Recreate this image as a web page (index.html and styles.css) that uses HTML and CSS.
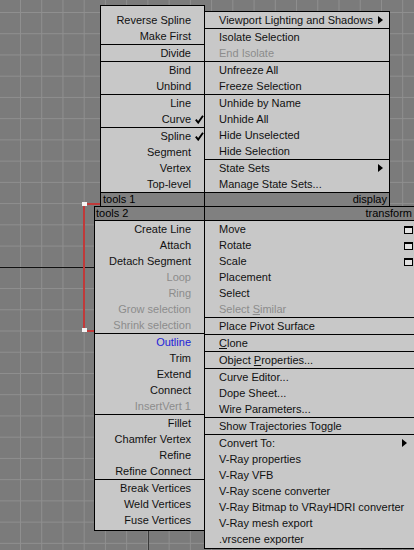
FILE: index.html
```html
<!DOCTYPE html>
<html>
<head>
<meta charset="utf-8">
<link rel="stylesheet" href="styles.css">
</head>
<body>
<div class="viewport">
  <div class="axis-h"></div>
  <div class="axis-v"></div>
  <svg class="spline" width="24" height="136" viewBox="0 0 24 136">
    <rect x="3" y="5" width="2" height="124" fill="#c03a3a"/>
    <rect x="6" y="3" width="16" height="2" fill="#c03a3a"/>
    <rect x="6" y="130" width="10" height="2" fill="#c03a3a"/>
    <rect x="2" y="2" width="5" height="4" fill="#f4f4f4"/>
    <rect x="2" y="128" width="5" height="4" fill="#f4f4f4"/>
  </svg>

  <div class="quad">
    <div class="quad-top">
      <div class="menu ul">
        <div class="items left">
          <div class="it">Reverse Spline</div>
          <div class="it">Make First</div>
          <div class="sep"></div>
          <div class="it">Divide</div>
          <div class="sep"></div>
          <div class="it">Bind</div>
          <div class="it">Unbind</div>
          <div class="sep"></div>
          <div class="it">Line</div>
          <div class="it checked">Curve<span class="chk"><svg width="9" height="9" viewBox="0 0 9 9"><path d="M0.8 4.6 L3.2 7.6 L8 0.8" fill="none" stroke="#000" stroke-width="1.9"/></svg></span></div>
          <div class="sep"></div>
          <div class="it checked">Spline<span class="chk"><svg width="9" height="9" viewBox="0 0 9 9"><path d="M0.8 4.6 L3.2 7.6 L8 0.8" fill="none" stroke="#000" stroke-width="1.9"/></svg></span></div>
          <div class="it">Segment</div>
          <div class="it">Vertex</div>
          <div class="it">Top-level</div>
        </div>
        <div class="head head-up">tools 1</div>
      </div>
      <div class="menu ur">
        <div class="items right">
          <div class="it"><span>Viewport Lighting and Shadows</span><span class="arrow arrow-tight"></span></div>
          <div class="sep"></div>
          <div class="it">Isolate Selection</div>
          <div class="it dis">End Isolate</div>
          <div class="sep"></div>
          <div class="it">Unfreeze All</div>
          <div class="it">Freeze Selection</div>
          <div class="sep"></div>
          <div class="it">Unhide by Name</div>
          <div class="it">Unhide All</div>
          <div class="it">Hide Unselected</div>
          <div class="it">Hide Selection</div>
          <div class="sep"></div>
          <div class="it"><span>State Sets</span><span class="arrow arrow-tight"></span></div>
          <div class="it">Manage State Sets...</div>
        </div>
        <div class="head head-up head-right">display</div>
      </div>
    </div>

    <div class="quad-bottom">
      <div class="menu ll">
        <div class="head head-down">tools 2</div>
        <div class="items left">
          <div class="it">Create Line</div>
          <div class="it">Attach</div>
          <div class="it">Detach Segment</div>
          <div class="it dis">Loop</div>
          <div class="it dis">Ring</div>
          <div class="it dis">Grow selection</div>
          <div class="it dis">Shrink selection</div>
          <div class="sep"></div>
          <div class="it blue">Outline</div>
          <div class="it">Trim</div>
          <div class="it">Extend</div>
          <div class="it">Connect</div>
          <div class="it dis">InsertVert 1</div>
          <div class="sep"></div>
          <div class="it">Fillet</div>
          <div class="it">Chamfer Vertex</div>
          <div class="it">Refine</div>
          <div class="it">Refine Connect</div>
          <div class="sep"></div>
          <div class="it">Break Vertices</div>
          <div class="it">Weld Vertices</div>
          <div class="it">Fuse Vertices</div>
        </div>
      </div>
      <div class="menu lr">
        <div class="head head-down head-right">transform</div>
        <div class="items right">
          <div class="it"><span>Move</span><span class="win"></span></div>
          <div class="it"><span>Rotate</span><span class="win"></span></div>
          <div class="it"><span>Scale</span><span class="win"></span></div>
          <div class="it">Placement</div>
          <div class="it">Select</div>
          <div class="it dis"><span>Select <u>S</u>imilar</span></div>
          <div class="sep"></div>
          <div class="it">Place Pivot Surface</div>
          <div class="sep"></div>
          <div class="it"><span><u>C</u>lone</span></div>
          <div class="sep"></div>
          <div class="it"><span>Object <u>P</u>roperties...</span></div>
          <div class="sep"></div>
          <div class="it">Curve Editor...</div>
          <div class="it">Dope Sheet...</div>
          <div class="it">Wire Parameters...</div>
          <div class="sep"></div>
          <div class="it">Show Trajectories Toggle</div>
          <div class="sep"></div>
          <div class="it"><span>Convert To:</span><span class="arrow arrow-wide"></span></div>
          <div class="it">V-Ray properties</div>
          <div class="it">V-Ray VFB</div>
          <div class="it">V-Ray scene converter</div>
          <div class="it">V-Ray Bitmap to VRayHDRI converter</div>
          <div class="it">V-Ray mesh export</div>
          <div class="it">.vrscene exporter</div>
        </div>
      </div>
    </div>
  </div>
</div>
</body>
</html>
```

FILE: styles.css
```css
html, body {
  margin: 0;
  padding: 0;
  background: #7b7b7b;
}

.viewport {
  position: relative;
  width: 414px;
  height: 550px;
  overflow: hidden;
  background-color: #7b7b7b;
  background-image:
    linear-gradient(to right, #8f8f8f 1px, transparent 1px),
    linear-gradient(to bottom, #8f8f8f 1px, transparent 1px);
  background-size: 21.24px 21.24px;
  background-position: 20px 12px;
  font-family: "Liberation Sans", Arial, sans-serif;
  font-size: 11px;
  color: #111;
}

.axis-h {
  position: absolute;
  left: 0;
  top: 267px;
  width: 200px;
  height: 1px;
  background: #111;
}

.axis-v {
  position: absolute;
  left: 148px;
  top: 500px;
  width: 1px;
  height: 50px;
  background: #3a3a3a;
}

.spline {
  position: absolute;
  left: 80px;
  top: 200px;
}

.quad {
  position: absolute;
  left: 94px;
  top: 5px;
}

.quad-top {
  display: flex;
  align-items: flex-end;
}

.quad-bottom {
  display: flex;
  align-items: flex-start;
  margin-top: -1px;
}

.menu {
  box-sizing: border-box;
  background: #c8c8c8;
  border: 1px solid #000;
  display: flex;
  flex-direction: column;
}

.ul {
  width: 105px;
  margin-left: 6px;
  padding-top: 6px;
}

.ur {
  width: 186px;
  margin-left: -1px;
}

.ll {
  width: 111px;
  padding-bottom: 2px;
}

.lr {
  width: 215px;
  margin-left: -1px;
  padding-bottom: 1px;
}

.items {
  display: flex;
  flex-direction: column;
}

.it {
  height: 16px;
  line-height: 16px;
  white-space: nowrap;
  display: flex;
  align-items: center;
}

.left .it {
  justify-content: flex-end;
  padding-right: 13px;
}

.right .it {
  justify-content: space-between;
  padding-left: 14px;
}

.sep {
  height: 1px;
  background: #000;
}

.dis {
  color: #8c8c8c;
}

.blue {
  color: #2323d8;
}

u {
  text-decoration: underline;
  text-underline-offset: 1px;
}

.chk {
  width: 13px;
  margin-right: -13px;
  padding-left: 4px;
  box-sizing: border-box;
  display: flex;
  align-items: center;
}

.arrow {
  width: 0;
  height: 0;
  border-top: 4px solid transparent;
  border-bottom: 4px solid transparent;
  border-left: 5px solid #000;
}

.arrow-tight {
  margin-right: 6px;
}

.arrow-wide {
  margin-right: 11px;
}

.win {
  box-sizing: border-box;
  width: 9px;
  height: 8px;
  border: 1px solid #000;
  border-top-width: 2px;
  background: #e2e2e2;
  margin-right: 5px;
  margin-top: 1px;
}

.head {
  height: 13px;
  line-height: 13px;
  background: #808080;
  color: #000;
  white-space: nowrap;
  padding: 0 2px;
}

.head-up {
  border-top: 1px solid #000;
}

.head-down {
  border-bottom: 1px solid #000;
  padding-left: 1px;
}

.head-right {
  text-align: right;
}

.lr .head-right {
  padding-right: 6px;
}
```
